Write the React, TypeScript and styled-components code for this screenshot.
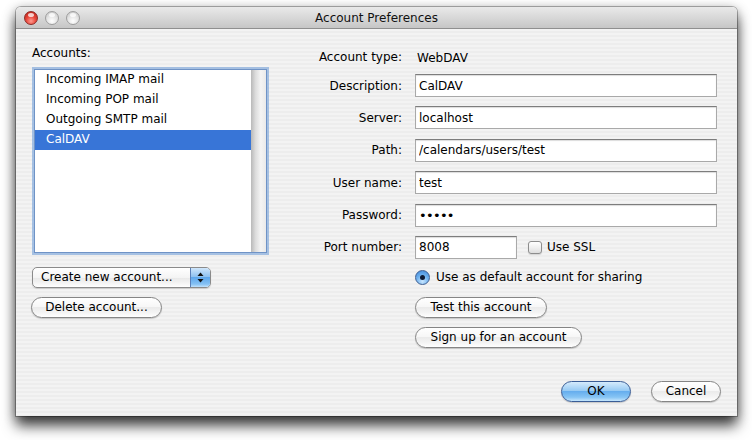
import React from "react";
import styled, { createGlobalStyle } from "styled-components";

const Global = createGlobalStyle`
  html, body { margin: 0; padding: 0; background: #ffffff; height: 100%; }
  body { font-family: "DejaVu Sans", "Noto Sans", sans-serif; font-size: 12px; color: #000; }
  #root { min-height: 100%; }
  * { box-sizing: border-box; }
`;

const Page = styled.div`
  min-height: 440px;
  padding: 7px 0 24px 16px;
`;

const Window = styled.div`
  width: 721px;
  height: 409px;
  display: flex;
  flex-direction: column;
  border-radius: 5px 5px 0 0;
  overflow: hidden;
  background: repeating-linear-gradient(to bottom, #ededed 0px, #ededed 2px, #f3f3f3 2px, #f3f3f3 4px);
  box-shadow: 0 0 0 1px rgba(0, 0, 0, 0.28), 0 10px 14px rgba(0, 0, 0, 0.7), 0 2px 12px rgba(0, 0, 0, 0.35);
`;

const TitleBar = styled.div`
  height: 22px;
  flex: none;
  display: flex;
  align-items: center;
  position: relative;
  padding-left: 8px;
  background: linear-gradient(to bottom, #e9e9e9 0%, #d8d8d8 50%, #c6c6c6 100%);
  border-bottom: 1px solid #8f8f8f;
`;

const Lights = styled.div`
  display: flex;
  gap: 7px;
`;

const Light = styled.span<{ $red?: boolean }>`
  width: 14px;
  height: 14px;
  border-radius: 50%;
  border: 1px solid ${(p) => (p.$red ? "#8c2a26" : "#9d9d9d")};
  background: ${(p) =>
    p.$red
      ? "radial-gradient(circle at 50% 75%, #ff9a8f 0%, #e8463a 45%, #b51d14 100%)"
      : "radial-gradient(circle at 50% 75%, #ffffff 0%, #e6e6e6 45%, #c2c2c2 100%)"};
  position: relative;
  &::after {
    content: "";
    position: absolute;
    left: 3px;
    top: 1px;
    width: 6px;
    height: 4px;
    border-radius: 50%;
    background: rgba(255, 255, 255, 0.75);
  }
`;

const Title = styled.div`
  position: absolute;
  left: 0;
  right: 0;
  top: 0;
  bottom: 0;
  display: flex;
  align-items: center;
  justify-content: center;
  font-size: 12px;
  color: #111;
  pointer-events: none;
`;

const Content = styled.div`
  flex: 1;
  display: flex;
  flex-direction: column;
  padding: 17px 20px 14px 16px;
`;

const Main = styled.div`
  flex: 1;
  display: flex;
  gap: 21px;
`;

const LeftColumn = styled.div`
  width: 237px;
  display: flex;
  flex-direction: column;
  align-items: flex-start;
`;

const SectionLabel = styled.div`
  height: 15px;
  line-height: 15px;
  margin-bottom: 6px;
`;

const ListFrame = styled.div`
  margin: 2px;
  width: 233px;
  height: 184px;
  border: 1px solid #6f93c6;
  box-shadow: 0 0 0 2px rgba(133, 171, 219, 0.7);
  background: #fff;
  display: flex;
`;

const ListBody = styled.div`
  flex: 1;
  display: flex;
  flex-direction: column;
`;

const ListRow = styled.div<{ $selected?: boolean }>`
  height: 20px;
  line-height: 19px;
  padding-left: 11px;
  background: ${(p) => (p.$selected ? "#3875d7" : "transparent")};
  color: ${(p) => (p.$selected ? "#fff" : "#000")};
`;

const ScrollTrack = styled.div`
  width: 15px;
  background: linear-gradient(to right, #b9b9b9 0%, #dcdcdc 30%, #f4f4f4 65%, #eaeaea 100%);
`;

const PopupButton = styled.div`
  margin-top: 12px;
  width: 179px;
  height: 21px;
  border-radius: 5px;
  border: 1px solid #8a8a8a;
  display: flex;
  overflow: hidden;
  box-shadow: 0 1px 1px rgba(0, 0, 0, 0.15);
  background: linear-gradient(to bottom, #ffffff 0%, #f4f4f4 50%, #e8e8e8 51%, #f6f6f6 85%, #ffffff 100%);
`;

const PopupText = styled.div`
  flex: 1;
  line-height: 19px;
  padding-left: 8px;
`;

const PopupArrows = styled.div`
  width: 20px;
  border-left: 1px solid #5a7fb8;
  display: flex;
  align-items: center;
  justify-content: center;
  background: linear-gradient(to bottom, #cfe6fb 0%, #8fc2f1 45%, #5ea7ec 50%, #85c1f3 85%, #c2e2fc 100%);
`;

const PillButton = styled.div<{ $width: number; $default?: boolean }>`
  width: ${(p) => p.$width}px;
  height: 21px;
  border-radius: 11px;
  border: 1px solid ${(p) => (p.$default ? "#3a5d96" : "#858585")};
  display: flex;
  align-items: center;
  justify-content: center;
  line-height: 19px;
  box-shadow: 0 1px 1px rgba(0, 0, 0, 0.18);
  background: ${(p) =>
    p.$default
      ? "linear-gradient(to bottom, #d5ebfc 0%, #98cbf4 45%, #66aeee 50%, #86c4f4 80%, #c6e6fd 100%)"
      : "linear-gradient(to bottom, #ffffff 0%, #f7f7f7 45%, #ebebeb 50%, #f5f5f5 80%, #ffffff 100%)"};
`;

const LeftButton = styled(PillButton)`
  margin-top: 9px;
  margin-left: -1px;
`;

const RightColumn = styled.div`
  flex: 1;
  display: flex;
  flex-direction: column;
  padding-top: 4px;
`;

const FormGrid = styled.div`
  display: grid;
  grid-template-columns: 112px 1fr;
  column-gap: 13px;
  row-gap: 9.4px;
  align-items: center;
`;

const FieldLabel = styled.label`
  text-align: right;
  white-space: nowrap;
`;

const StaticValue = styled.div`
  height: 16px;
  line-height: 16px;
  padding-left: 2px;
  margin-bottom: -1.4px;
`;

const fieldBox = `
  height: 23px;
  border: 1px solid #a9a9a9;
  border-top-color: #7d7d7d;
  box-shadow: inset 0 1px 1px rgba(0, 0, 0, 0.14);
  background: #fff;
  padding: 0 3px;
`;

const TextField = styled.input<{ $width?: number }>`
  ${fieldBox}
  width: ${(p) => (p.$width ? `${p.$width}px` : "100%")};
  font-family: "DejaVu Sans", "Noto Sans", sans-serif;
  font-size: 12px;
  color: #000;
  outline: none;
  margin: 0;
`;

const Dots = styled.div`
  ${fieldBox}
  line-height: 21px;
  font-size: 13px;
  letter-spacing: -0.7px;
`;

const InlineRow = styled.div`
  display: flex;
  align-items: center;
  gap: 11px;
`;

const CheckLabel = styled.label`
  display: flex;
  align-items: center;
  gap: 5px;
`;

const CheckBox = styled.span`
  width: 14px;
  height: 13px;
  border-radius: 3px;
  border: 1px solid #8d8d8d;
  background: linear-gradient(to bottom, #ffffff 0%, #f0f0f0 50%, #dedede 100%);
  box-shadow: 0 1px 1px rgba(0, 0, 0, 0.12);
`;

const Extras = styled.div`
  margin-left: 125px;
  display: flex;
  flex-direction: column;
  align-items: flex-start;
`;

const RadioRow = styled.label`
  margin-top: 11px;
  display: flex;
  align-items: center;
  gap: 6px;
  height: 15px;
`;

const Radio = styled.span`
  width: 15px;
  height: 15px;
  border-radius: 50%;
  border: 1px solid #3f5f92;
  display: flex;
  align-items: center;
  justify-content: center;
  background: radial-gradient(circle at 50% 80%, #c8e6ff 0%, #6fb1ee 50%, #3d86d8 100%);
  &::after {
    content: "";
    width: 5px;
    height: 5px;
    border-radius: 50%;
    background: #0e1a33;
  }
`;

const ExtraButton = styled(PillButton)<{ $gap: number }>`
  margin-top: ${(p) => p.$gap}px;
`;

const Footer = styled.div`
  display: flex;
  justify-content: flex-end;
  gap: 20px;
  margin-right: -4px;
`;

const UpDown = () => (
  <svg width="7" height="11" viewBox="0 0 7 11">
    <path d="M3.5 0.5 L6.5 4 L0.5 4 Z" fill="#111" />
    <path d="M3.5 10.5 L6.5 7 L0.5 7 Z" fill="#111" />
  </svg>
);

export default function App() {
  return (
    <>
      <Global />
      <Page>
        <Window>
          <TitleBar>
            <Lights>
              <Light $red />
              <Light />
              <Light />
            </Lights>
            <Title>Account Preferences</Title>
          </TitleBar>
          <Content>
            <Main>
              <LeftColumn>
                <SectionLabel>Accounts:</SectionLabel>
                <ListFrame>
                  <ListBody>
                    <ListRow>Incoming IMAP mail</ListRow>
                    <ListRow>Incoming POP mail</ListRow>
                    <ListRow>Outgoing SMTP mail</ListRow>
                    <ListRow $selected>CalDAV</ListRow>
                  </ListBody>
                  <ScrollTrack />
                </ListFrame>
                <PopupButton>
                  <PopupText>Create new account...</PopupText>
                  <PopupArrows>
                    <UpDown />
                  </PopupArrows>
                </PopupButton>
                <LeftButton $width={131}>Delete account...</LeftButton>
              </LeftColumn>
              <RightColumn>
                <FormGrid>
                  <FieldLabel>Account type:</FieldLabel>
                  <StaticValue>WebDAV</StaticValue>
                  <FieldLabel>Description:</FieldLabel>
                  <TextField readOnly defaultValue="CalDAV" />
                  <FieldLabel>Server:</FieldLabel>
                  <TextField readOnly defaultValue="localhost" />
                  <FieldLabel>Path:</FieldLabel>
                  <TextField readOnly defaultValue="/calendars/users/test" />
                  <FieldLabel>User name:</FieldLabel>
                  <TextField readOnly defaultValue="test" />
                  <FieldLabel>Password:</FieldLabel>
                  <Dots>•••••</Dots>
                  <FieldLabel>Port number:</FieldLabel>
                  <InlineRow>
                    <TextField readOnly defaultValue="8008" $width={102} />
                    <CheckLabel>
                      <CheckBox />
                      Use SSL
                    </CheckLabel>
                  </InlineRow>
                </FormGrid>
                <Extras>
                  <RadioRow>
                    <Radio />
                    Use as default account for sharing
                  </RadioRow>
                  <ExtraButton $width={132} $gap={12}>Test this account</ExtraButton>
                  <ExtraButton $width={167} $gap={9}>Sign up for an account</ExtraButton>
                </Extras>
              </RightColumn>
            </Main>
            <Footer>
              <PillButton $width={70} $default>OK</PillButton>
              <PillButton $width={70}>Cancel</PillButton>
            </Footer>
          </Content>
        </Window>
      </Page>
    </>
  );
}
